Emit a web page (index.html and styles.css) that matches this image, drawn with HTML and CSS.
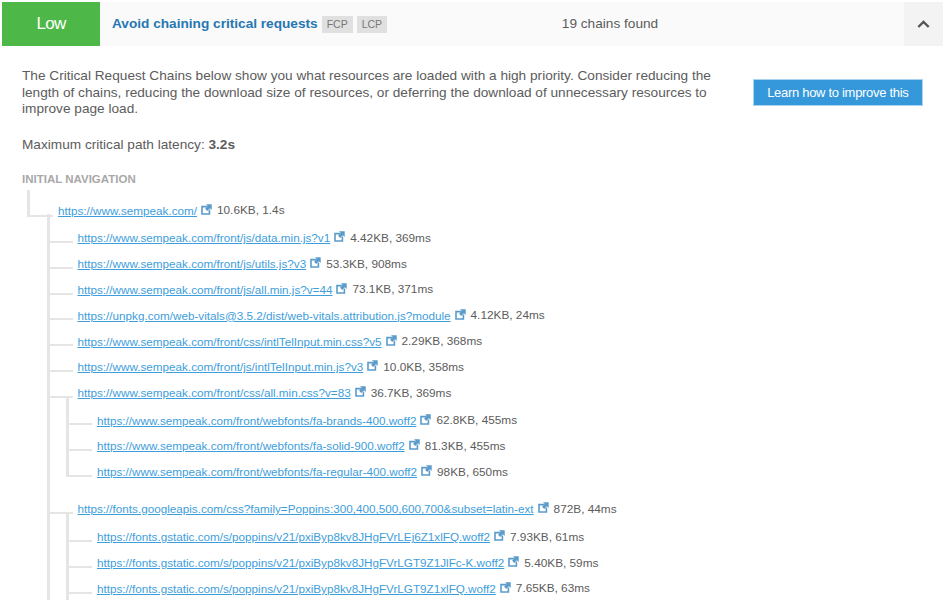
FILE: index.html
```html
<!DOCTYPE html>
<html lang="en">
<head>
    <meta charset="UTF-8">
    <meta name="viewport" content="width=device-width, initial-scale=1.0">
    <title>Avoid chaining critical requests</title>
    <link rel="stylesheet" href="styles.css">
</head>
<body>
    <svg class="defs" width="0" height="0" aria-hidden="true">
        <symbol id="ext" viewBox="0 0 11 11">
            <path d="M6.5 2.6H1v7.4h7.4V5.5" fill="none" stroke="currentColor" stroke-width="1.6"/>
            <path d="M5 0.3h5.7V6L8.9 4.2 6.2 6.9 4.1 4.8l2.7-2.7z" fill="currentColor"/>
        </symbol>
    </svg>

    <header class="bar">
        <div class="badge">Low</div>
        <div class="title-col">
            <h1>Avoid chaining critical requests</h1>
            <span class="tag">FCP</span>
            <span class="tag">LCP</span>
        </div>
        <div class="count">19 chains found</div>
        <div></div>
        <div class="toggle">
            <svg width="13" height="9" viewBox="0 0 13 9"><path d="M1.3 7L6.5 2l5.2 5" fill="none" stroke="#555" stroke-width="2.4"/></svg>
        </div>
    </header>

    <main class="content">
        <section class="intro">
            <p class="desc">The Critical Request Chains below show you what resources are loaded with a high priority. Consider reducing the length of chains, reducing the download size of resources, or deferring the download of unnecessary resources to improve page load.</p>
            <a class="btn">Learn how to improve this</a>
        </section>
        <p class="latency">Maximum critical path latency: <b>3.2s</b></p>
        <h2>INITIAL NAVIGATION</h2>

        <ul class="tree root">
            <li class="last">
                <div class="row"><a>https://www.sempeak.com/</a><svg class="ico"><use href="#ext"/></svg><span>10.6KB, 1.4s</span></div>
                <ul class="tree level2">
                    <li><div class="row"><a>https://www.sempeak.com/front/js/data.min.js?v1</a><svg class="ico"><use href="#ext"/></svg><span>4.42KB, 369ms</span></div></li>
                    <li><div class="row"><a>https://www.sempeak.com/front/js/utils.js?v3</a><svg class="ico"><use href="#ext"/></svg><span>53.3KB, 908ms</span></div></li>
                    <li><div class="row"><a>https://www.sempeak.com/front/js/all.min.js?v=44</a><svg class="ico"><use href="#ext"/></svg><span>73.1KB, 371ms</span></div></li>
                    <li><div class="row"><a>https://unpkg.com/web-vitals@3.5.2/dist/web-vitals.attribution.js?module</a><svg class="ico"><use href="#ext"/></svg><span>4.12KB, 24ms</span></div></li>
                    <li><div class="row"><a>https://www.sempeak.com/front/css/intlTelInput.min.css?v5</a><svg class="ico"><use href="#ext"/></svg><span>2.29KB, 368ms</span></div></li>
                    <li><div class="row"><a>https://www.sempeak.com/front/js/intlTelInput.min.js?v3</a><svg class="ico"><use href="#ext"/></svg><span>10.0KB, 358ms</span></div></li>
                    <li>
                        <div class="row"><a>https://www.sempeak.com/front/css/all.min.css?v=83</a><svg class="ico"><use href="#ext"/></svg><span>36.7KB, 369ms</span></div>
                        <ul class="tree level3">
                            <li><div class="row"><a>https://www.sempeak.com/front/webfonts/fa-brands-400.woff2</a><svg class="ico"><use href="#ext"/></svg><span>62.8KB, 455ms</span></div></li>
                            <li><div class="row"><a>https://www.sempeak.com/front/webfonts/fa-solid-900.woff2</a><svg class="ico"><use href="#ext"/></svg><span>81.3KB, 455ms</span></div></li>
                            <li class="last"><div class="row"><a>https://www.sempeak.com/front/webfonts/fa-regular-400.woff2</a><svg class="ico"><use href="#ext"/></svg><span>98KB, 650ms</span></div></li>
                        </ul>
                    </li>
                    <li>
                        <div class="row"><a>https://fonts.googleapis.com/css?family=Poppins:300,400,500,600,700&amp;subset=latin-ext</a><svg class="ico"><use href="#ext"/></svg><span>872B, 44ms</span></div>
                        <ul class="tree level3 fonts">
                            <li><div class="row"><a>https://fonts.gstatic.com/s/poppins/v21/pxiByp8kv8JHgFVrLEj6Z1xlFQ.woff2</a><svg class="ico"><use href="#ext"/></svg><span>7.93KB, 61ms</span></div></li>
                            <li><div class="row"><a>https://fonts.gstatic.com/s/poppins/v21/pxiByp8kv8JHgFVrLGT9Z1JlFc-K.woff2</a><svg class="ico"><use href="#ext"/></svg><span>5.40KB, 59ms</span></div></li>
                            <li><div class="row"><a>https://fonts.gstatic.com/s/poppins/v21/pxiByp8kv8JHgFVrLGT9Z1xlFQ.woff2</a><svg class="ico"><use href="#ext"/></svg><span>7.65KB, 63ms</span></div></li>
                        </ul>
                    </li>
                </ul>
            </li>
        </ul>
    </main>
</body>
</html>
```

FILE: styles.css
```css
html, body {
    height: 600px;
    overflow: hidden;
}
body {
    font-family: "Liberation Sans", Arial, sans-serif;
    margin: 0;
    padding: 2px 2px 0;
    box-sizing: border-box;
    background: white;
    color: #5c5c5c;
}
.defs {
    display: block;
}

/* header bar */
.bar {
    display: grid;
    grid-template-columns: 98px 420px 180px 1fr 39px;
    height: 44px;
    background: #fafafa;
}
.badge {
    display: flex;
    align-items: center;
    justify-content: center;
    background: #4db848;
    color: white;
    font-size: 17px;
    letter-spacing: -0.8px;
}
.title-col {
    display: flex;
    align-items: center;
    padding: 0 0 1px 12px;
}
h1 {
    margin: 0 4px 0 0;
    font-size: 13.65px;
    color: #2677b2;
}
.tag {
    background: #e0e0e0;
    color: #777;
    font-size: 10.5px;
    padding: 2px 5px 3px;
    margin: 2px 4px 0 0;
}
.count {
    display: flex;
    align-items: center;
    justify-content: center;
    padding-bottom: 1px;
    font-size: 13.65px;
}
.toggle {
    display: flex;
    align-items: center;
    justify-content: center;
    background: #f3f3f3;
}

/* body of the panel */
.content {
    padding: 22px 0 0 20px;
}
.intro {
    display: flex;
    justify-content: space-between;
    align-items: center;
    padding-right: 20px;
}
.desc {
    width: 700px;
    margin: 0;
    font-size: 13.65px;
    line-height: 16.5px;
}
.btn {
    background: #3498db;
    border: 1px solid #a9d3f0;
    color: white;
    font-size: 13px;
    letter-spacing: -0.3px;
    padding: 5px 13.5px;
    margin-bottom: 1px;
}
.latency {
    margin: 19px 0 0;
    font-size: 13.65px;
    line-height: 16px;
}
h2 {
    margin: 19px 0 0;
    font-size: 11.5px;
    line-height: 14px;
    color: #a8a8a8;
}

/* request tree: the connector lines are background stripes on each li */
.tree {
    list-style: none;
    margin: 0;
    padding: 0;
}
.tree li {
    padding-left: 31px;
    background:
        linear-gradient(#e5e5e5, #e5e5e5) 0 0 / 3px 100% no-repeat,
        linear-gradient(#e5e5e5, #e5e5e5) 0 16px / 26px 2px no-repeat;
}
.tree li.last {
    background-size: 3px 18px, 26px 2px;
}
.tree.root {
    margin: 4px 0 0 5px;
}
.tree.root > li {
    padding-top: 8px;
    background-position: 0 0, 0 25px;
    background-size: 3px 27px, 26px 2px;
}
.tree.level2, .tree.level3 {
    background: linear-gradient(#e5e5e5, #e5e5e5) 0 0 / 3px 11px no-repeat;
}
.tree.level2 {
    margin: -9px 0 0 -11.5px;
    padding-top: 10.6px;
}
.tree.level3 {
    margin: -9.6px 0 0 -11.5px;
    padding: 11px 0 11px;
}
.tree.level3.fonts {
    margin-top: -8.6px;
}
.row {
    display: flex;
    align-items: center;
    height: 25.83px;
    font-size: 11.8px;
    white-space: nowrap;
}
.row a {
    color: #3e9edb;
    font-size: 11.7px;
    text-decoration: underline;
}
.ico {
    width: 11px;
    height: 11px;
    margin: -2px 5px 0 4px;
    color: #5b9bc9;
}
```
